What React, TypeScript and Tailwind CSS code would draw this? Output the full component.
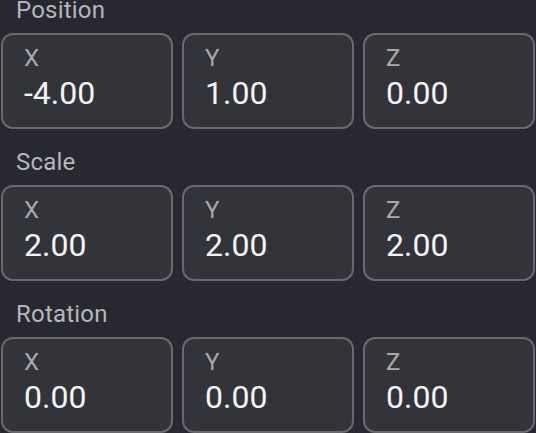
const sections = [
  { title: "Position", values: ["-4.00", "1.00", "0.00"] },
  { title: "Scale", values: ["2.00", "2.00", "2.00"] },
  { title: "Rotation", values: ["0.00", "0.00", "0.00"] },
];

const axes = ["X", "Y", "Z"];

const App = () => {
  return (
    <div className="h-[433px] w-[536px] overflow-hidden bg-[#282830] font-['Roboto',sans-serif]">
      <div className="-mt-[6px] flex flex-col gap-[17px] px-px">
        {sections.map((section) => (
          <div key={section.title}>
            <h3 className="pl-[15px] text-[24px] leading-8 tracking-[0.2px] text-[#b5b5bd]">
              {section.title}
            </h3>
            <div className="mt-[7px] grid grid-cols-3 gap-[9px]">
              {section.values.map((value, i) => (
                <div
                  key={i}
                  className="h-[96px] rounded-xl border-2 border-[#68686e] bg-[#33333a] pl-[21px] pt-[11px]"
                >
                  <div className="text-[24px] leading-6 text-[#a8a8b0]">{axes[i]}</div>
                  <div className="mt-[7px] text-[32px] leading-8 text-[#f4f4f6]">{value}</div>
                </div>
              ))}
            </div>
          </div>
        ))}
      </div>
    </div>
  );
};

export default App;
